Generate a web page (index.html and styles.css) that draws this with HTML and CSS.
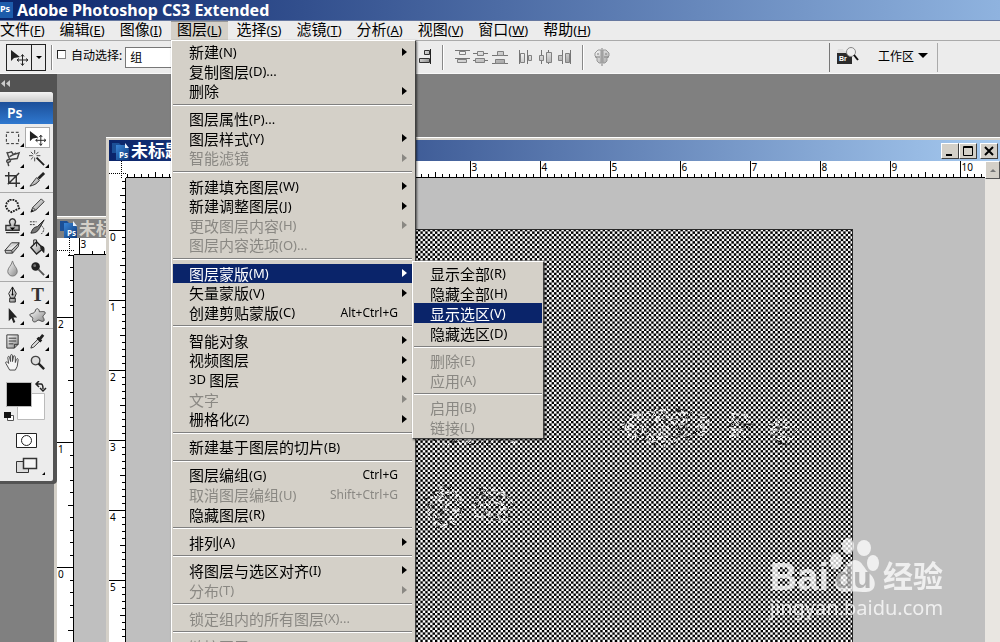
FILE: index.html
```html
<!DOCTYPE html>
<html lang="zh-CN">

<head>
    <meta charset="UTF-8">
    <title>Adobe Photoshop CS3 Extended</title>
    <link rel="stylesheet" href="styles.css">
</head>

<body>
    <svg class="defs" width="0" height="0" aria-hidden="true">
        <defs>
            <linearGradient id="metal" x1="0" y1="0" x2="1" y2="1">
                <stop offset="0" stop-color="#fff" />
                <stop offset="1" stop-color="#888" />
            </linearGradient>
            <linearGradient id="psBlue" x1="0" y1="0" x2="1" y2="1">
                <stop offset="0" stop-color="#3a86d8" />
                <stop offset="1" stop-color="#0c3777" />
            </linearGradient>
            <symbol id="move" viewBox="0 0 18 18">
                <path d="M1 2v11l3-3 6-1z" fill="#222" />
                <path d="M12.500 7v10M7.500 12h10M11 8.500l1.500-2 1.500 2M11 15.500l1.500 2 1.500-2M9 10.500L7 12l2 1.500M16 10.500l2 1.500-2 1.500" fill="none" stroke="#222" />
            </symbol>
            <symbol id="psDoc" viewBox="0 0 18 18">
                <path d="M1 1h7l2 2v8H1z" fill="#1b4f96" />
                <path d="M5 3h9l4 4v11H5z" fill="url(#psBlue)" />
                <path d="M14 1v5h4z" fill="#e9f2ff" />
            </symbol>
        </defs>
    </svg>

    <header class="titlebar">
        <span class="app-icon">Ps</span>
        <h1>Adobe Photoshop CS3 Extended</h1>
    </header>

    <nav class="menubar">
        <button>文件<span class="key">(<u>F</u>)</span></button>
        <button>编辑<span class="key">(<u>E</u>)</span></button>
        <button>图像<span class="key">(<u>I</u>)</span></button>
        <button class="open">图层<span class="key">(<u>L</u>)</span></button>
        <button>选择<span class="key">(<u>S</u>)</span></button>
        <button>滤镜<span class="key">(<u>T</u>)</span></button>
        <button>分析<span class="key">(<u>A</u>)</span></button>
        <button>视图<span class="key">(<u>V</u>)</span></button>
        <button>窗口<span class="key">(<u>W</u>)</span></button>
        <button>帮助<span class="key">(<u>H</u>)</span></button>
    </nav>

    <div class="options">
        <button class="tool-preset" aria-label="移动工具">
            <svg width="18" height="18"><use href="#move" /></svg>
            <span class="drop"></span>
        </button>
        <span class="divider"></span>
        <input type="checkbox" id="autoSelect">
        <label for="autoSelect">自动选择:</label>
        <select aria-label="自动选择">
            <option>组</option>
            <option>图层</option>
        </select>
        <div class="align-icons">
            <svg width="13" height="18" viewBox="0 0 13 18"><path d="M11.500 1v15" stroke="#222" /><path d="M5.500 2.500h5v4h-5zM.5 10.500h10v4H.5z" fill="url(#metal)" stroke="#333" /></svg>
            <span class="divider"></span>
            <svg class="faded" width="54" height="18" viewBox="0 0 54 18">
                <path d="M1 2.500h15M1 10.500h15M19 5.500h15M19 12.500h15M38 7.500h16M38 15.500h16" stroke="#444" />
                <path d="M5.500 3.500h6v3h-6zM3.500 11.500h9v3h-9zM23.500 3.500h6v4h-6zM21.500 10.500h9v4h-9zM43.500 3.500h6v4h-6zM41.500 11.500h9v4h-9z" fill="url(#metal)" stroke="#555" />
            </svg>
            <svg class="faded" width="54" height="18" viewBox="0 0 54 18">
                <path d="M1.500 2v14M9.500 2v14M23.500 2v14M30.500 2v14M44.500 2v14M52.500 2v14" stroke="#444" />
                <path d="M2.500 5.500h4v9h-4zM10.500 7.500h3v5h-3zM21.500 7.500h4v5h-4zM28.500 4.500h5v10h-5zM40.500 7.500h4v5h-4zM47.500 5.500h4v9h-4z" fill="url(#metal)" stroke="#555" />
            </svg>
            <span class="divider"></span>
            <svg class="faded" width="16" height="18" viewBox="0 0 16 18">
                <path d="M7 2L4 2 1 5v3l2 2v3l2 2h2zM9 2l3 0 3 3v3l-2 2v3l-2 2H9z" fill="url(#metal)" stroke="#777" />
                <path d="M8 0v18M3 6h2M11 6h2M1 9h5M10 9h5" stroke="#555" />
            </svg>
        </div>
        <div class="workspace">
            <svg width="24" height="20" viewBox="0 0 24 20">
                <path d="M1 6l1-3h5l1 2h8v11H1z" fill="#ddd" />
                <path d="M1 7h15v11H1z" fill="#2b2b2b" />
                <circle cx="15" cy="6" r="4.500" fill="#eee" stroke="#888" />
                <path d="M18 9l4 5" stroke="#111" stroke-width="2" />
                <text class="br" x="3" y="15">Br</text>
            </svg>
            <button>工作区<span class="drop"></span></button>
        </div>
    </div>

    <main class="desktop">
        <section class="window back">
            <div class="caption">
                <span class="doc-icon"><svg width="18" height="18"><use href="#psDoc" /></svg><b>Ps</b></span>
                <h2>未标题</h2>
            </div>
            <div class="view">
                <div class="corner"></div>
                <svg class="ruler" data-dir="h" data-origin="380" data-unit="-125"></svg>
                <svg class="ruler" data-dir="v" data-origin="312" data-unit="-125"></svg>
                <div class="pasteboard"></div>
            </div>
        </section>

        <section class="window front">
            <div class="caption">
                <span class="doc-icon"><svg width="18" height="18"><use href="#psDoc" /></svg><b>Ps</b></span>
                <h2>未标题</h2>
                <div class="buttons">
                    <button aria-label="最小化"><svg width="12" height="12"><path d="M2 10h6" stroke="#000" stroke-width="2" /></svg></button>
                    <button aria-label="最大化"><svg width="12" height="12"><path d="M1.500 1.500h9v9h-9zM1 2.500h10" fill="none" stroke="#000" /></svg></button>
                    <button class="close" aria-label="关闭"><svg width="12" height="12"><path d="M2 2l8 8M10 2l-8 8" stroke="#000" stroke-width="2" /></svg></button>
                </div>
            </div>
            <div class="view">
                <div class="corner"></div>
                <svg class="ruler" data-dir="h" data-origin="134" data-unit="70"></svg>
                <svg class="ruler" data-dir="v" data-origin="52" data-unit="70"></svg>
                <div class="pasteboard">
                    <canvas id="artboard" width="593" height="413"></canvas>
                </div>
                <div class="scrollbar"><button aria-label="向上滚动"></button></div>
            </div>
        </section>

        <aside class="dock">
            <div class="dock-head">
                <svg width="12" height="8"><path d="M5 0v7L1 3.500zM10 0v7L6 3.500z" fill="#ccc" /></svg>
            </div>
            <div class="toolbox">
                <div class="grip"></div>
                <div class="ps-logo">Ps</div>
                <div class="group">
                    <button aria-label="矩形选框"><svg viewBox="0 0 18 18"><path d="M2.500 3.500h13v12h-13z" fill="none" stroke="#222" stroke-dasharray="3 2" /></svg></button>
                    <button class="active" aria-label="移动"><svg viewBox="0 0 18 18"><use href="#move" /></svg></button>
                    <button aria-label="套索"><svg viewBox="0 0 18 18"><path d="M3 2l3 8 8-1 2-6-6 2-2-3-4 1M6 10c-4 0-4 4-1 3s2-3 1-3M4 13l1 4M6 7l7-4" fill="none" stroke="#444" stroke-width="1.500" /></svg></button>
                    <button aria-label="魔棒"><svg viewBox="0 0 18 18"><path d="M8 8l8 8" stroke="#222" stroke-width="2" /><path d="M6 0v4M6 8v4M0 6h4M8 6h4M2 2l2.500 2.500M10 2L7.500 4.500M2 10l2.500-2.500" stroke="#444" /></svg></button>
                    <button aria-label="裁剪"><svg viewBox="0 0 18 18"><path d="M5 1v12h12M1 5h12v12M4 14L16 2" fill="none" stroke="#333" stroke-width="1.500" /></svg></button>
                    <button aria-label="切片"><svg viewBox="0 0 18 18"><path d="M1 16L8 7l3 3c-3 4-6 5-10 6z" fill="url(#metal)" stroke="#333" /><path d="M10 8l6-6" stroke="#222" stroke-width="3" /></svg></button>
                </div>
                <div class="group">
                    <button aria-label="修补"><svg viewBox="0 0 18 18"><path d="M6 3l4 0 4 2 1 4 1 3-4 2-4 2-4-2-2-4 1-4z" fill="#eee" stroke="#222" stroke-width="2" stroke-dasharray="2 1" /></svg></button>
                    <button aria-label="铅笔"><svg viewBox="0 0 18 18"><path d="M2 16l2-5 9-9 3 3-9 9zM4 11l3 3" fill="url(#metal)" stroke="#333" /><path d="M2 16l1-3 2 2z" fill="#111" /></svg></button>
                    <button aria-label="图章"><svg viewBox="0 0 18 18"><path d="M7 8c0-2-2-3-1-5 1-3 5-3 6 0 1 2-1 3-1 5h5v5H2V8zM2 15.500h14" fill="url(#metal)" stroke="#333" stroke-width="1.500" /><path d="M6 10h6l-3 3z" /></svg></button>
                    <button aria-label="历史画笔"><svg viewBox="0 0 18 18"><path d="M2 16c2-5 3-6 7-7l7-7-5 9c-2 4-5 5-9 5z" fill="#777" stroke="#222" /><path d="M1 4h7M1 7h5M13 8c4 3 3 6 0 9" fill="none" stroke="#333" stroke-dasharray="2 1" /></svg></button>
                    <button aria-label="橡皮擦"><svg viewBox="0 0 18 18"><path d="M1 12l7-8h8l-1 4-6 7H2zM1 12h7l8-8M8 12l1 3" fill="url(#metal)" stroke="#333" /></svg></button>
                    <button aria-label="油漆桶"><svg viewBox="0 0 18 18"><path d="M2 9l6-6 7 7-7 6z" fill="url(#metal)" stroke="#222" stroke-width="1.500" /><path d="M5 6V1h3v7" fill="none" stroke="#222" /><path d="M12 7c5 0 5 4 4 8-2-1-2-3-4-5z" fill="#222" /></svg></button>
                    <button aria-label="模糊"><svg viewBox="0 0 18 18"><path d="M9 1c1 5 5 7 5 11a5 5 0 0 1-10 0c0-4 4-6 5-11z" fill="url(#metal)" stroke="#777" /></svg></button>
                    <button aria-label="减淡"><svg viewBox="0 0 18 18"><circle cx="7" cy="7" r="4.500" fill="#222" /><circle cx="6" cy="6" r="1.500" fill="#777" /><path d="M10 10l6 6" stroke="#555" stroke-width="2" /></svg></button>
                </div>
                <div class="group">
                    <button aria-label="钢笔"><svg viewBox="0 0 18 18"><path d="M9 1l4 7-2 5H7L5 8zM6 13h6v4H6z" fill="url(#metal)" stroke="#222" /><path d="M9 1v8" stroke="#111" /><circle cx="9" cy="9" r="1" /></svg></button>
                    <button class="type" aria-label="文字">T</button>
                    <button aria-label="路径选择"><svg viewBox="0 0 18 18"><path d="M5 1v14l3-3 2 5 2-1-2-5h4z" fill="#222" /></svg></button>
                    <button aria-label="形状"><svg viewBox="0 0 18 18"><path d="M7 3c2-3 4 0 4 2 3 0 7-1 6 2-1 2-3 2-2 4 2 3 1 5-2 4-2-1-3-2-5 0-3 2-5 0-4-3 0-2-4-2-3-4 1-2 5 0 6-5z" fill="url(#metal)" stroke="#444" /></svg></button>
                </div>
                <div class="group plain">
                    <button aria-label="注释"><svg viewBox="0 0 18 18"><path d="M3 2h12v10l-4 4H3z" fill="url(#metal)" stroke="#333" /><path d="M5 5.500h8M5 8.500h8M5 11.500h5M11 16v-4h4" fill="none" stroke="#333" /></svg></button>
                    <button aria-label="吸管"><svg viewBox="0 0 18 18"><path d="M2 16l1-3 7-7 2 2-7 7z" fill="#ddd" stroke="#333" /><path d="M9 5l4 4M11 7l4-5" stroke="#222" stroke-width="3" /></svg></button>
                    <button class="single" aria-label="抓手"><svg viewBox="0 0 18 18"><path d="M6 17L2 10c-1-2 1-2 2-1l1 1-1-6c0-2 2-2 2 0l1 4V2c0-2 2-2 2 0v6l1-5c0-2 2-1 2 0v6l1-3c1-2 2-1 2 0l-1 7-2 4z" fill="#f4f4f4" stroke="#444" /></svg></button>
                    <button class="single" aria-label="缩放"><svg viewBox="0 0 18 18"><circle cx="7" cy="7" r="4.500" fill="#ddd" stroke="#444" stroke-width="1.500" /><path d="M10 10l6 6" stroke="#222" stroke-width="2.500" /></svg></button>
                </div>
                <svg class="colors" width="48" height="44" viewBox="0 0 48 44">
                    <path d="M17.500 12.500h27v26h-27z" fill="#fff" stroke="#bbb" />
                    <path d="M6.500 1.500h25v24h-25z" fill="#000" stroke="#bbb" />
                    <path d="M37 3h4c2 0 2 2 2 5M39 0l-3 3 3 3M40 7l3 3 3-3" fill="none" stroke="#222" stroke-width="1.500" />
                    <path d="M7.500 34.500h6v5h-6z" fill="#fff" stroke="#555" />
                    <path d="M4 31h7v6H4z" fill="#111" />
                </svg>
                <svg class="modes" width="48" height="52" viewBox="0 0 48 52">
                    <path d="M16.500 4.500h20v14h-20z" fill="#fff" stroke="#222" />
                    <circle cx="26.500" cy="11.500" r="5" fill="none" stroke="#222" />
                    <path d="M16.500 32.500h12v11h-12z" fill="#ddd" stroke="#333" />
                    <path d="M23.500 29.500h13v10h-13z" fill="#f4f4f4" stroke="#333" stroke-width="1.500" />
                    <path d="M45 43v3h-3z" />
                </svg>
            </div>
        </aside>
    </main>

    <ul class="menu layer-menu">
        <li><button class="sub">新建<span class="key">(N)</span></button></li>
        <li><button>复制图层<span class="key">(D)...</span></button></li>
        <li><button class="sub">删除</button></li>
        <li class="sep"></li>
        <li><button>图层属性<span class="key">(P)...</span></button></li>
        <li><button class="sub">图层样式<span class="key">(Y)</span></button></li>
        <li><button class="sub" disabled>智能滤镜</button></li>
        <li class="sep"></li>
        <li><button class="sub">新建填充图层<span class="key">(W)</span></button></li>
        <li><button class="sub">新建调整图层<span class="key">(J)</span></button></li>
        <li><button class="sub" disabled>更改图层内容<span class="key">(H)</span></button></li>
        <li><button disabled>图层内容选项<span class="key">(O)...</span></button></li>
        <li class="sep"></li>
        <li><button class="sub selected">图层蒙版<span class="key">(M)</span></button></li>
        <li><button class="sub">矢量蒙版<span class="key">(V)</span></button></li>
        <li><button>创建剪贴蒙版<span class="key">(C)</span><kbd>Alt+Ctrl+G</kbd></button></li>
        <li class="sep"></li>
        <li><button class="sub">智能对象</button></li>
        <li><button class="sub">视频图层</button></li>
        <li><button class="sub"><span class="key">3D&nbsp;</span>图层</button></li>
        <li><button class="sub" disabled>文字</button></li>
        <li><button class="sub">栅格化<span class="key">(Z)</span></button></li>
        <li class="sep"></li>
        <li><button>新建基于图层的切片<span class="key">(B)</span></button></li>
        <li class="sep"></li>
        <li><button>图层编组<span class="key">(G)</span><kbd>Ctrl+G</kbd></button></li>
        <li><button disabled>取消图层编组<span class="key">(U)</span><kbd>Shift+Ctrl+G</kbd></button></li>
        <li><button>隐藏图层<span class="key">(R)</span></button></li>
        <li class="sep"></li>
        <li><button class="sub">排列<span class="key">(A)</span></button></li>
        <li class="sep"></li>
        <li><button class="sub">将图层与选区对齐<span class="key">(I)</span></button></li>
        <li><button class="sub" disabled>分布<span class="key">(T)</span></button></li>
        <li class="sep"></li>
        <li><button disabled>锁定组内的所有图层<span class="key">(X)...</span></button></li>
        <li class="sep"></li>
        <li><button disabled>链接图层</button></li>
    </ul>

    <ul class="menu mask-menu">
        <li><button>显示全部<span class="key">(R)</span></button></li>
        <li><button>隐藏全部<span class="key">(H)</span></button></li>
        <li><button class="selected">显示选区<span class="key">(V)</span></button></li>
        <li><button>隐藏选区<span class="key">(D)</span></button></li>
        <li class="sep"></li>
        <li><button disabled>删除<span class="key">(E)</span></button></li>
        <li><button disabled>应用<span class="key">(A)</span></button></li>
        <li class="sep"></li>
        <li><button disabled>启用<span class="key">(B)</span></button></li>
        <li><button disabled>链接<span class="key">(L)</span></button></li>
    </ul>

    <div class="watermark">
        <div class="brand">
            <span>Bai</span>
            <span class="paw">
                <svg width="50" height="56" viewBox="0 0 50 56">
                    <g fill="#fff">
                        <ellipse cx="7" cy="23" rx="6" ry="8" />
                        <ellipse cx="19" cy="8" rx="6" ry="8" />
                        <ellipse cx="35" cy="10" rx="7" ry="8" />
                        <ellipse cx="44" cy="25" rx="6" ry="8" />
                        <path d="M26 22c7 0 9 9 15 14 7 6 7 18-4 18-6 0-14-1-20 0-10 1-14-10-8-16 7-6 9-16 17-16z" />
                    </g>
                </svg>
                <b>du</b>
            </span>
            <span class="jy">经验</span>
        </div>
        <div class="site">jingyan.baidu.com</div>
    </div>

    <script src="script.js"></script>
</body>

</html>
```
FILE: styles.css
```css
* {
    box-sizing: border-box;
}

body {
    margin: 0;
    height: 100vh;
    display: flex;
    flex-direction: column;
    overflow: hidden;
    position: relative;
    background: #808080;
    color: #000;
    font-family: "Noto Sans", "Noto Sans CJK SC", sans-serif;
    font-size: 15px;
}

button {
    border: 0;
    padding: 0;
    margin: 0;
    background: none;
    color: inherit;
    font: inherit;
}

h1,
h2 {
    margin: 0;
}

svg {
    display: block;
    flex: none;
}

.defs {
    position: absolute;
}

.key,
kbd {
    font-family: "Noto Sans", sans-serif;
    font-size: 13px;
}

/* title bar */
.titlebar {
    height: 21px;
    flex: none;
    display: flex;
    align-items: center;
    gap: 4px;
    background: linear-gradient(90deg, #0a246a, #8fb3df);
    border-bottom: 1px solid #6678a0;
    color: #fff;
}

.titlebar h1 {
    font-family: "Noto Sans", sans-serif;
    font-size: 16px;
    line-height: 20px;
}

.app-icon {
    width: 13px;
    height: 16px;
    background: #1d5cab;
    font-size: 9px;
    line-height: 14px;
    font-weight: bold;
}

/* menu bar */
.menubar {
    height: 20px;
    flex: none;
    display: flex;
    gap: 3px;
    background: #ececec;
    border-bottom: 1px solid #aaa;
}

.menubar button {
    padding: 0 6px 4px;
    line-height: 16px;
    white-space: nowrap;
}

.menubar button:first-child {
    padding-left: 0;
}

.menubar .open {
    background: #d4d0c8;
    box-shadow: inset 0 1px #999;
}

/* options bar */
.options {
    height: 33px;
    flex: none;
    display: flex;
    align-items: center;
    padding-left: 6px;
    background: #ececec;
    border-bottom: 1px solid #f8f8f8;
    font-size: 13px;
}

.tool-preset {
    width: 40px;
    height: 27px;
    display: flex;
    align-items: center;
    border: 1px solid #222;
    padding-left: 3px;
    gap: 3px;
}

.tool-preset .drop {
    height: 25px;
    width: 14px;
    display: flex;
    align-items: center;
    justify-content: center;
    border-left: 1px solid #222;
}

.tool-preset .drop::after {
    content: "";
    border: 3px solid transparent;
    border-top-color: #000;
    border-bottom: 0;
}

.divider {
    width: 2px;
    height: 25px;
    border-left: 1px solid #888;
    border-right: 1px solid #fff;
}

.options .divider {
    margin-left: 5px;
}

.options input {
    appearance: none;
    width: 9px;
    height: 9px;
    margin: 0 5px 6px 4px;
    background: #fff;
    border: 1px solid #888;
    border-top-color: #222;
    border-left-color: #222;
}

.options label {
    padding-bottom: 5px;
    font-size: 12px;
}

.options select {
    appearance: none;
    width: 140px;
    height: 21px;
    margin-left: 3px;
    padding: 0 4px;
    border: 1px solid #777;
    border-radius: 0;
    background: #fff;
    color: #000;
    font: inherit;
    font-size: 12px;
}

.align-icons {
    display: flex;
    align-items: center;
    gap: 10px;
    margin-left: 154px;
}

.options .align-icons .divider {
    margin: 0;
}

.faded {
    opacity: 0.7;
}

.workspace {
    display: flex;
    align-items: center;
    gap: 18px;
    height: 29px;
    margin-left: auto;
    margin-right: 62px;
    padding: 0 9px 3px 6px;
    border-left: 1px solid #777;
    border-right: 1px solid #aaa;
}

.workspace button {
    display: flex;
    align-items: center;
    gap: 4px;
    font-size: 12px;
}

.workspace .drop {
    border: 5px solid transparent;
    border-top-color: #000;
    border-bottom: 0;
}

.br {
    font-family: "Liberation Sans", sans-serif;
    font-size: 7px;
    font-weight: bold;
    fill: #fff;
}

/* document windows */
.desktop {
    flex: 1;
    position: relative;
    overflow: hidden;
}

.window {
    position: absolute;
    bottom: 0;
    display: flex;
    flex-direction: column;
    padding: 2px 0 0 3px;
    background: #d4d0c8;
    border-top: 1px solid #fff;
}

.window.back {
    left: 54px;
    top: 142px;
    width: 60px;
}

.window.front {
    left: 106px;
    top: 63px;
    right: 0;
}

.caption {
    height: 21px;
    flex: none;
    display: flex;
    align-items: center;
    gap: 2px;
    padding-left: 2px;
    color: #fff;
    overflow: hidden;
}

.back .caption {
    height: 19px;
    background: #808080;
    color: #d4d0c8;
}

.front .caption {
    background: linear-gradient(90deg, #0a246a, #a6caf0);
}

.caption h2 {
    font-size: 17px;
    line-height: 20px;
    white-space: nowrap;
}

.doc-icon {
    position: relative;
}

.doc-icon b {
    position: absolute;
    right: 1px;
    bottom: 0;
    color: #fff;
    font-size: 8px;
    line-height: 10px;
}

.buttons {
    display: flex;
    margin-left: auto;
    margin-right: 2px;
}

.buttons button {
    width: 18px;
    height: 16px;
    padding: 1px 2px;
    background: #d4d0c8;
    border: 1px solid #404040;
    border-top-color: #fff;
    border-left-color: #fff;
}

.buttons .close {
    margin-left: 3px;
}

.view {
    flex: 1;
    min-height: 0;
    display: grid;
    grid-template-columns: 17px 1fr auto;
    grid-template-rows: 17px 1fr;
}

.corner {
    background:
        repeating-linear-gradient(90deg, #000 0 1px, transparent 1px 2px) 0 12px / 100% 1px no-repeat,
        repeating-linear-gradient(#000 0 1px, transparent 1px 2px) 12px 0 / 1px 100% no-repeat,
        #fff;
}

.ruler {
    width: 100%;
    height: 100%;
    min-width: 0;
    min-height: 0;
    overflow: hidden;
    background: #fff;
    font-size: 10px;
}

.ruler[data-dir="h"] {
    border-bottom: 1px solid #000;
}

.ruler[data-dir="v"] {
    border-right: 1px solid #000;
    grid-column: 1;
}

.pasteboard {
    background: #bfbfbf;
    overflow: hidden;
    min-width: 0;
}

.front .pasteboard {
    padding: 51px 0 0 134px;
}

#artboard {
    display: block;
}

.scrollbar {
    width: 15px;
    grid-column: 3;
    grid-row: 1 / 3;
    background: #e9e6e1;
}

.scrollbar button {
    width: 15px;
    height: 18px;
    display: flex;
    align-items: center;
    justify-content: center;
    background: #d4d0c8;
    border: 1px solid #555;
    border-top-color: #fff;
    border-left-color: #fff;
}

.scrollbar button::after {
    content: "";
    border: 3px solid transparent;
    border-bottom-color: #777;
    border-top: 0;
}

/* toolbox */
.dock {
    position: absolute;
    left: 0;
    top: 0;
    width: 57px;
    background: #535353;
    border-radius: 0 0 4px 0;
    padding-bottom: 3px;
}

.dock-head {
    height: 18px;
    padding: 6px 0 0 0;
}

.toolbox {
    width: 53px;
    background: #ececec;
    border-radius: 0 3px 2px 0;
    overflow: hidden;
}

.grip {
    height: 10px;
    background: linear-gradient(#f4f4f4, #ccc);
}

.ps-logo {
    height: 22px;
    margin-bottom: 1px;
    padding-left: 7px;
    background: linear-gradient(#1c4f99, #2f78cf);
    color: #fff;
    font-size: 14px;
    font-weight: 600;
    line-height: 22px;
}

.group {
    display: grid;
    grid-template-columns: 25px 25px;
    grid-auto-rows: 21px;
    padding: 2px 0;
    border-bottom: 1px solid #aaa;
}

.group.plain {
    border-bottom: 0;
}

.group button {
    position: relative;
    display: flex;
    align-items: center;
    justify-content: center;
}

.group svg {
    width: 17px;
    height: 17px;
}

.group button::after {
    content: "";
    position: absolute;
    right: 1px;
    bottom: 1px;
    border: 2px solid #000;
    border-top-color: transparent;
    border-left-color: transparent;
}

.group .active {
    background: #fff;
    border: 1px solid #aaa;
}

.group .active::after,
.group .single::after {
    display: none;
}

.group .type {
    font-family: "Liberation Serif", serif;
    font-size: 19px;
    font-weight: bold;
    color: #333;
}

.colors {
    margin-top: 6px;
}

.modes {
    margin-top: 4px;
}

/* pop-up menus */
.menu {
    position: absolute;
    margin: 0;
    list-style: none;
    background: #d4d0c8;
    border: 1px solid #404040;
    border-top-color: #fff;
    border-left-color: #fff;
    box-shadow: 1px 1px 2px rgba(0, 0, 0, 0.6);
}

.menu button {
    width: 100%;
    height: 100%;
    display: flex;
    align-items: center;
    padding: 0 14px 0 16px;
    white-space: nowrap;
    text-align: left;
}

.menu .sub::after {
    content: "";
    margin-left: auto;
    margin-right: -9px;
    border: 4px solid transparent;
    border-left: 5px solid currentColor;
    border-right: 0;
}

.menu kbd {
    margin-left: auto;
    font-size: 12px;
}

.menu .selected {
    background: #0a246a;
    color: #fff;
}

.menu button:disabled {
    color: #8a8883;
}

.menu .sep {
    display: flex;
    align-items: center;
}

.menu .sep::before {
    content: "";
    flex: 1;
    border-top: 1px solid #808080;
    border-bottom: 1px solid #fff;
}

/* taller than the window, so it runs off the bottom edge */
.layer-menu {
    left: 171px;
    top: 40px;
    bottom: -16px;
    width: 245px;
    display: flex;
    flex-direction: column;
    justify-content: space-between;
    padding: 1px 3px 1px 1px;
}

.layer-menu li {
    height: 19px;
    flex: none;
}

.layer-menu .sep {
    height: 8px;
}

.mask-menu {
    left: 412px;
    top: 261px;
    width: 132px;
    padding: 1px;
}

.mask-menu li {
    height: 20px;
}

.mask-menu .sep {
    height: 7px;
}

/* watermark */
.watermark {
    position: absolute;
    right: 54px;
    bottom: 20px;
    color: #fff;
    opacity: 0.75;
}

.brand {
    display: flex;
    align-items: flex-end;
    justify-content: flex-end;
    margin-right: 3px;
    font-family: "Liberation Sans", "Noto Sans CJK SC", sans-serif;
    font-size: 38px;
    font-weight: bold;
    line-height: 34px;
}

.paw {
    position: relative;
}

.paw b {
    position: absolute;
    left: 6px;
    bottom: 0;
    color: #b0b0b0;
    font-size: 30px;
    line-height: 32px;
}

.jy {
    margin-left: 4px;
    font-size: 30px;
}

.site {
    font-family: "Noto Sans", sans-serif;
    font-size: 20px;
    line-height: 28px;
}
```
FILE: script.js
```js
const SVG_NS = 'http://www.w3.org/2000/svg';

function addLine(svg, x1, y1, x2, y2) {
    const line = document.createElementNS(SVG_NS, 'path');
    line.setAttribute('d', `M${x1} ${y1}L${x2} ${y2}`);
    line.setAttribute('stroke', '#000');
    line.setAttribute('shape-rendering', 'crispEdges');
    svg.appendChild(line);
}

function drawRuler(svg) {
    const horizontal = svg.dataset.dir === 'h';
    const origin = Number(svg.dataset.origin);
    const unit = Number(svg.dataset.unit);
    const length = horizontal ? svg.clientWidth : svg.clientHeight;

    for (let i = -40; i < 140; i++) {
        const pos = Math.round(origin + i * unit / 10) + 0.5;
        if (pos < 0 || pos > length) continue;
        const size = i % 10 === 0 ? 17 : i % 5 === 0 ? 6 : 4;

        if (horizontal) addLine(svg, pos, 17 - size, pos, 17);
        else addLine(svg, 17 - size, pos, 17, pos);

        if (i % 10 === 0) {
            const label = document.createElementNS(SVG_NS, 'text');
            label.setAttribute('x', horizontal ? pos + 1 : 1);
            label.setAttribute('y', horizontal ? 10 : pos + 10);
            label.textContent = Math.abs(i / 10);
            svg.appendChild(label);
        }
    }
}

document.querySelectorAll('.ruler').forEach(drawRuler);

// halftone checkerboard, the cell is off the pixel grid so it shows a moire
const canvas = document.getElementById('artboard');
const ctx = canvas.getContext('2d');
const image = ctx.createImageData(canvas.width, canvas.height);
const CELL = 2.43;

// rough patches where the pattern breaks up: x, y, width, height
const patches = [
    [165, 258, 38, 42],
    [212, 258, 42, 38],
    [360, 178, 90, 38],
    [470, 182, 22, 30],
    [508, 190, 28, 26],
    [165, 208, 90, 8]
];

let seed = 7;
function random() {
    seed = (seed * 16807) % 2147483647;
    return seed / 2147483647;
}

// signed coverage of one pixel by the square wave, -1 to 1
function wave(p) {
    let sum = 0;
    for (let s = 0; s < 8; s++) {
        sum += Math.floor((p + (s + 0.5) / 8) / CELL) % 2 ? 1 : -1;
    }
    return sum / 8;
}

for (let y = 0; y < canvas.height; y++) {
    for (let x = 0; x < canvas.width; x++) {
        let v = 127 + 127 * wave(x) * wave(y);
        if (y === 0 || x === canvas.width - 1) v = 40;
        const i = (y * canvas.width + x) * 4;
        image.data[i] = image.data[i + 1] = image.data[i + 2] = v;
        image.data[i + 3] = 255;
    }
}
ctx.putImageData(image, 0, 0);

// short strokes scattered inside each patch
patches.forEach(([px, py, w, h]) => {
    for (let n = 0; n < w * h / 10; n++) {
        const angle = random() * Math.PI * 2;
        const radius = Math.sqrt(random());
        const x = px + w / 2 + Math.cos(angle) * radius * w / 2;
        const y = py + h / 2 + Math.sin(angle) * radius * h / 2;
        ctx.strokeStyle = random() < 0.4 ? '#111' : '#fff';
        ctx.beginPath();
        ctx.moveTo(x, y);
        ctx.lineTo(x + random() * 8 - 4, y + random() * 6 - 3);
        ctx.stroke();
    }
});
```
